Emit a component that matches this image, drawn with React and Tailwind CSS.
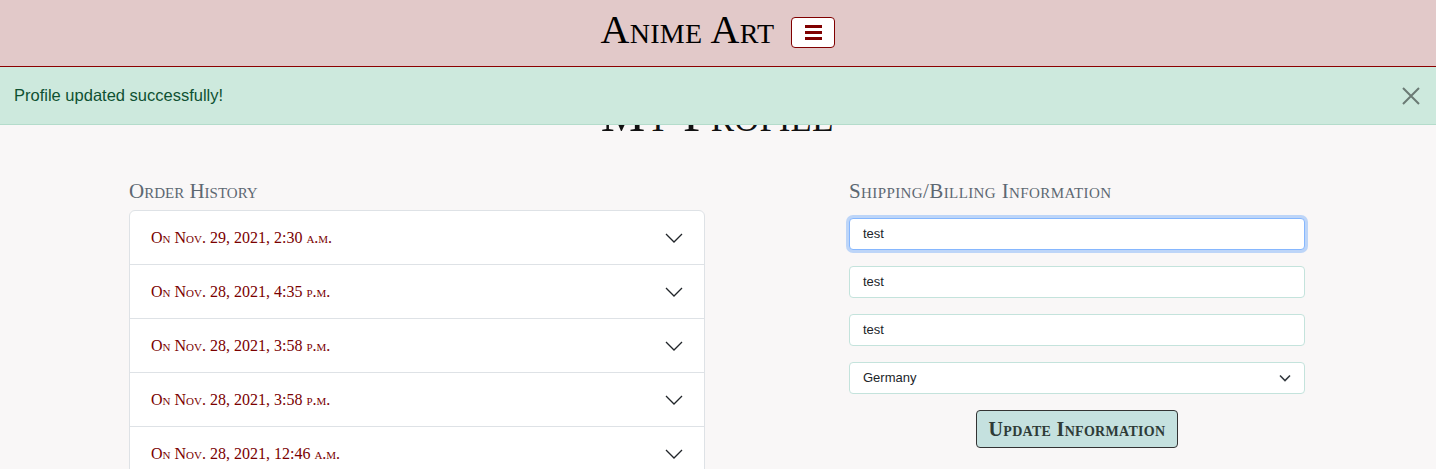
import React from 'react';

const orders = [
  'On Nov. 29, 2021, 2:30 a.m.',
  'On Nov. 28, 2021, 4:35 p.m.',
  'On Nov. 28, 2021, 3:58 p.m.',
  'On Nov. 28, 2021, 3:58 p.m.',
  'On Nov. 28, 2021, 12:46 a.m.',
];

const serif = "font-['Liberation_Serif',serif] [font-variant:small-caps]";

function Chevron() {
  return (
    <svg width="18" height="10" viewBox="0 0 18 10" fill="none" stroke="#212529" strokeWidth="1.3">
      <path d="M1 1l8 8 8-8" />
    </svg>
  );
}

function Header() {
  return (
    <header className="h-[67px] bg-[#e2c9c9] border-b border-[#8b0000] flex items-center justify-center gap-[17px]">
      <div className={`${serif} text-[40px] leading-none text-black tracking-[0.3px] mt-[-6px]`}>Anime Art</div>
      <button className="w-[44px] h-[31px] bg-white border border-[#800000] rounded-[4px] flex flex-col items-center justify-center gap-[3px] mt-[-2px]">
        <span className="block w-[17px] h-[3px] bg-[#800000]" />
        <span className="block w-[17px] h-[3px] bg-[#800000]" />
        <span className="block w-[17px] h-[3px] bg-[#800000]" />
      </button>
    </header>
  );
}

function Alert() {
  return (
    <div className="absolute left-0 right-0 top-[67px] h-[58px] bg-[#cde9dd] border-b border-[#b4dccb] flex items-center justify-between pl-[14px] pr-[16px]">
      <span className="font-['Liberation_Sans',sans-serif] text-[16.5px] text-[#0f5132]">Profile updated successfully!</span>
      <svg width="18" height="18" viewBox="0 0 18 18" stroke="#6b7a74" strokeWidth="2">
        <path d="M1 1l16 16M17 1L1 17" />
      </svg>
    </div>
  );
}

function Field({ value, focus }) {
  return (
    <div
      className={`h-[32px] bg-white rounded-[4px] flex items-center px-[13px] font-['Liberation_Sans',sans-serif] text-[13px] text-[#212529] ${
        focus
          ? 'border border-[#86b7fe] shadow-[0_0_0_3px_rgba(13,110,253,0.25)]'
          : 'border border-[#c4e3dc]'
      }`}
    >
      {value}
    </div>
  );
}

export default function App() {
  return (
    <div className="relative min-h-[469px] bg-[#f9f7f7] overflow-hidden">
      <Header />
      <main className="w-[1176px] mx-auto -translate-x-[1px]">
        <h1 className={`${serif} text-center text-[50px] leading-none text-[#111] pt-[22px]`}>My Profile</h1>
        <div className="flex justify-between mt-[42px]">
          <section className="w-[576px]">
            <h2 className={`${serif} text-[21px] leading-none text-[#5d6872] mb-[8px]`}>Order History</h2>
            <div className="bg-white border border-[#dee2e6] rounded-t-[6px]">
              {orders.map((o, i) => (
                <div
                  key={i}
                  className={`flex items-center justify-between pl-[21px] pr-[21px] ${
                    i > 0 ? 'h-[54px] border-t border-[#dee2e6]' : 'h-[53px]'
                  }`}
                >
                  <span className={`${serif} text-[16px] text-[#7a0000]`}>{o}</span>
                  <Chevron />
                </div>
              ))}
            </div>
          </section>
          <section className="w-[456px]">
            <h2 className={`${serif} text-[21px] leading-none text-[#5d6872] mb-[16px] tracking-[0.4px]`}>Shipping/Billing Information</h2>
            <div className="flex flex-col gap-[16px]">
              <Field value="test" focus />
              <Field value="test" />
              <Field value="test" />
              <div className="h-[32px] bg-white rounded-[4px] border border-[#c4e3dc] flex items-center justify-between px-[13px] font-['Liberation_Sans',sans-serif] text-[13px] text-[#212529]">
                <span>Germany</span>
                <svg width="12" height="8" viewBox="0 0 12 8" fill="none" stroke="#343a40" strokeWidth="1.6">
                  <path d="M1 1.5l5 5 5-5" />
                </svg>
              </div>
              <div className="flex justify-center">
                <button className={`${serif} h-[38px] px-[12px] bg-[#c5e1df] border border-[#333] rounded-[4px] text-[20px] font-bold text-[#2e3b37] tracking-[0.3px]`}>
                  Update Information
                </button>
              </div>
            </div>
          </section>
        </div>
      </main>
      <Alert />
    </div>
  );
}
